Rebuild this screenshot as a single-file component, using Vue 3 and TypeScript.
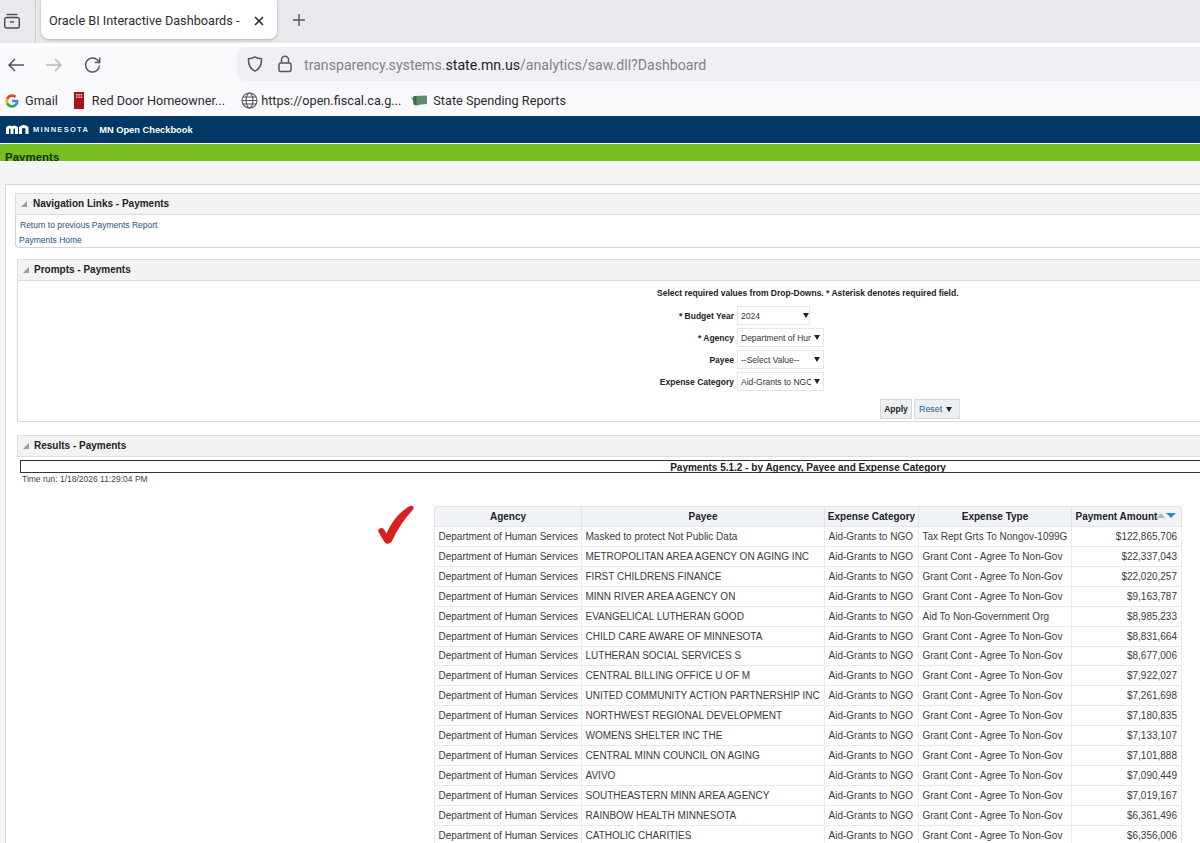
<script setup lang="ts">
const agency = 'Department of Human Services'
const grant = 'Grant Cont - Agree To Non-Gov'
interface Row { payee: string; type: string; amount: string }
const rows: Row[] = [
  { payee: 'Masked to protect Not Public Data', type: 'Tax Rept Grts To Nongov-1099G', amount: '$122,865,706' },
  { payee: 'METROPOLITAN AREA AGENCY ON AGING INC', type: grant, amount: '$22,337,043' },
  { payee: 'FIRST CHILDRENS FINANCE', type: grant, amount: '$22,020,257' },
  { payee: 'MINN RIVER AREA AGENCY ON', type: grant, amount: '$9,163,787' },
  { payee: 'EVANGELICAL LUTHERAN GOOD', type: 'Aid To Non-Government Org', amount: '$8,985,233' },
  { payee: 'CHILD CARE AWARE OF MINNESOTA', type: grant, amount: '$8,831,664' },
  { payee: 'LUTHERAN SOCIAL SERVICES S', type: grant, amount: '$8,677,006' },
  { payee: 'CENTRAL BILLING OFFICE U OF M', type: grant, amount: '$7,922,027' },
  { payee: 'UNITED COMMUNITY ACTION PARTNERSHIP INC', type: grant, amount: '$7,261,698' },
  { payee: 'NORTHWEST REGIONAL DEVELOPMENT', type: grant, amount: '$7,180,835' },
  { payee: 'WOMENS SHELTER INC THE', type: grant, amount: '$7,133,107' },
  { payee: 'CENTRAL MINN COUNCIL ON AGING', type: grant, amount: '$7,101,888' },
  { payee: 'AVIVO', type: grant, amount: '$7,090,449' },
  { payee: 'SOUTHEASTERN MINN AREA AGENCY', type: grant, amount: '$7,019,167' },
  { payee: 'RAINBOW HEALTH MINNESOTA', type: grant, amount: '$6,361,496' },
  { payee: 'CATHOLIC CHARITIES', type: grant, amount: '$6,356,006' },
]
const prompts = [
  { label: '* Budget Year', value: '2024', short: true },
  { label: '* Agency', value: 'Department of Human Services', short: false },
  { label: 'Payee', value: '--Select Value--', short: false },
  { label: 'Expense Category', value: 'Aid-Grants to NGO', short: false },
]
</script>

<template>
  <div class="screen">
    <header class="tabstrip">
      <div class="tabside">
        <svg width="18" height="18" viewBox="0 0 18 18" fill="none" stroke="#4a4a52" stroke-width="1.4">
          <path d="M3.500 2.500h11" />
          <rect x="1.700" y="5.500" width="14.600" height="10.500" rx="2" />
          <path d="M7 10h4" />
        </svg>
      </div>
      <div class="tab">
        <span class="tabtitle">Oracle BI Interactive Dashboards -</span>
        <svg width="12" height="12" viewBox="0 0 12 12" stroke="#222" stroke-width="1.5"><path d="M2 2l8 8M10 2l-8 8" /></svg>
      </div>
      <svg class="plus" width="16" height="16" viewBox="0 0 16 16" stroke="#55555c" stroke-width="1.4"><path d="M8 2v12M2 8h12" /></svg>
    </header>

    <nav class="toolbar">
      <svg class="navicon first" width="18" height="18" viewBox="0 0 18 18" fill="none" stroke="#55555c" stroke-width="1.5"><path d="M17 9H2M8 3L2 9l6 6" /></svg>
      <svg class="navicon" width="18" height="18" viewBox="0 0 18 18" fill="none" stroke="#b8b8bc" stroke-width="1.5"><path d="M1 9h15M10 3l6 6-6 6" /></svg>
      <svg class="navicon" width="18" height="18" viewBox="0 0 18 18" fill="none" stroke="#55555c" stroke-width="1.5"><path d="M16.500 9.500a7 7 0 1 1-2.100-5.500L16.500 6.200M16.700 1.500v4.900h-4.900" /></svg>
      <div class="urlbar">
        <svg width="18" height="18" viewBox="0 0 18 18" fill="none" stroke="#55555c" stroke-width="1.5"><path d="M9 1.800c2 1.300 4.200 1.900 6.500 2 .3 5.800-1.700 10-6.500 12.400C4.200 13.800 2.200 9.600 2.500 3.800c2.300-.1 4.500-.7 6.500-2z" /></svg>
        <svg class="lock" width="14" height="18" viewBox="0 0 14 18" fill="none" stroke="#55555c" stroke-width="1.5"><rect x="1" y="8" width="12" height="8.500" rx="1.500" /><path d="M3.500 8V4.800a3.500 3.500 0 0 1 7 0V8" /></svg>
        <span class="url">transparency.systems.<b>state.mn.us</b>/analytics/saw.dll?Dashboard</span>
      </div>
    </nav>

    <div class="bookmarks">
      <span class="bm gmail">
        <svg width="14" height="14" viewBox="0 0 48 48"><path fill="#4285f4" d="M46 24.500c0-1.600-.1-3.100-.4-4.500H24v8.600h12.400c-.5 2.900-2.100 5.300-4.600 6.900v5.700h7.400C43.600 36.900 46 31.200 46 24.500z" /><path fill="#34a853" d="M24 47c6.200 0 11.400-2 15.200-5.800l-7.400-5.700c-2 1.400-4.700 2.200-7.800 2.200-6 0-11-4-12.800-9.500H3.600v5.900C7.400 41.600 15.100 47 24 47z" /><path fill="#fbbc05" d="M11.200 28.200c-.5-1.400-.7-2.800-.7-4.200s.3-2.900.7-4.200v-5.900H3.600C2 17 1 20.400 1 24s1 7 2.600 10.100z" /><path fill="#ea4335" d="M24 10.300c3.400 0 6.400 1.200 8.800 3.400l6.600-6.600C35.400 3.400 30.200 1 24 1 15.100 1 7.400 6.400 3.600 13.900l7.600 5.900C13 14.300 18 10.300 24 10.300z" /></svg>
        Gmail
      </span>
      <span class="bm door">
        <svg width="10" height="17" viewBox="0 0 10 17"><rect width="10" height="17" fill="#a31616" /><path d="M2 2h1.500v1.500H2zM4.300 2h1.500v1.500H4.300zM6.600 2h1.500v1.500H6.600zM2 4.500h1.500V6H2zM4.300 4.500h1.500V6H4.300zM6.600 4.500h1.500V6H6.600z" fill="#eec9c9" /></svg>
        Red Door Homeowner...
      </span>
      <span class="bm globe">
        <svg width="17" height="17" viewBox="0 0 17 17" fill="none" stroke="#55555c" stroke-width="1.100"><circle cx="8.500" cy="8.500" r="7.500" /><ellipse cx="8.500" cy="8.500" rx="3.400" ry="7.500" /><path d="M1 8.500h15M2 5h13M2 12h13" /></svg>
        https://open.fiscal.ca.g...
      </span>
      <span class="bm state">
        <svg width="16" height="12" viewBox="0 0 16 12"><path d="M0 2.500l2 .5L3 1l13-.5V9l-6 .6-4 1-2.500-.3L2 5.500z" fill="#5f8f6b" /><path d="M2 3L3 1h2.500v8.800l-3-.3z" fill="#3d6b4a" /></svg>
        State Spending Reports
      </span>
    </div>

    <div class="brandbar">
      <svg width="23" height="9" viewBox="0 0 23 9" fill="none" stroke="#fff" stroke-width="3"><path d="M1.500 9V3c1.300-1.500 3.200-1.500 4.500 0v6M6 3c1.300-1.500 3.300-1.500 4.500 0v6" /><path d="M14.500 9V2.800c1.800-1.500 4.500-1.500 6.500 0V9" /></svg>
      <span class="wordmark">MINNESOTA</span>
      <span class="brandtitle">MN Open Checkbook</span>
    </div>
    <div class="greenbar"><span>Payments</span></div>

    <main class="page">
      <div class="panel">
        <section class="sec navsec">
          <h2 class="sechead"><i class="tri"></i>Navigation Links - Payments</h2>
          <div class="navbody">
            <a class="link one">Return to previous Payments Report</a>
            <a class="link">Payments Home</a>
          </div>
        </section>

        <section class="sec promptsec">
          <h2 class="sechead"><i class="tri"></i>Prompts - Payments</h2>
          <div class="promptbody">
            <div class="form">
              <p class="hint">Select required values from Drop-Downs. * Asterisk denotes required field.</p>
              <div v-for="p in prompts" :key="p.label" class="prow">
                <label class="plabel">{{ p.label }}</label>
                <div class="select" :class="{ short: p.short }">
                  <span class="sval">{{ p.value }}</span>
                  <i class="arrow"></i>
                </div>
              </div>
              <div class="buttons">
                <button class="btn apply" type="button">Apply</button>
                <button class="btn reset" type="button">Reset <i class="arrow small"></i></button>
              </div>
            </div>
          </div>
        </section>

        <section class="sec resultsec">
          <h2 class="sechead"><i class="tri"></i>Results - Payments</h2>
          <div class="reportwrap">
            <div class="reporttitle">Payments 5.1.2 - by Agency, Payee and Expense Category</div>
            <div class="timerun">Time run: 1/18/2026 11:29:04 PM</div>
            <div class="tablewrap">
              <svg class="check" width="40" height="42" viewBox="0 0 40 42">
                <path d="M3 26C5 24 8 25 9 28L10.500 30.500C15 20 23 9 34 3C36.500 1.800 38.500 4 37 6.500C28 16 21 27 16 38C14.500 41 10 42 8.500 39C6 35 3.500 31 2.500 29C2 28 2 27 3 26Z" fill="#d8201f" />
              </svg>
              <table class="report">
                <colgroup>
                  <col class="c1" /><col class="c2" /><col class="c3" /><col class="c4" /><col class="c5" />
                </colgroup>
                <thead>
                  <tr>
                    <th>Agency</th>
                    <th>Payee</th>
                    <th>Expense Category</th>
                    <th>Expense Type</th>
                    <th class="amt">Payment Amount<span class="sort"><i class="up"></i><i class="down"></i></span></th>
                  </tr>
                </thead>
                <tbody>
                  <tr v-for="r in rows" :key="r.payee">
                    <td>{{ agency }}</td>
                    <td>{{ r.payee }}</td>
                    <td>Aid-Grants to NGO</td>
                    <td>{{ r.type }}</td>
                    <td class="num">{{ r.amount }}</td>
                  </tr>
                </tbody>
              </table>
            </div>
          </div>
        </section>
      </div>
    </main>
  </div>
</template>

<style>
html, body { margin: 0; background: #fff; overflow: hidden; }
</style>

<style scoped>
.screen { width: 1200px; height: 843px; overflow: hidden; background: #fff; font-family: "Liberation Sans", Arial, sans-serif; color: #222; }
.tabstrip { height: 43px; background: #e9e9ed; display: flex; align-items: flex-start; }
.tabside { width: 36px; height: 43px; box-sizing: border-box; border-right: 1px solid #c9c9ce; display: flex; align-items: center; padding: 0 0 1px 3px; margin-right: 5px; }
.tab { width: 236px; height: 39px; background: #fff; border-radius: 0 0 8px 8px; box-shadow: 0 1px 3px rgba(0,0,0,.25); display: flex; align-items: center; box-sizing: border-box; padding: 2px 12px 0 8px; justify-content: space-between; }
.tabtitle { font: 12.700px Roboto, sans-serif; color: #2b2b33; white-space: nowrap; }
.plus { margin: 12px 0 0 14px; }
.toolbar { background: #f9f9fb; display: flex; align-items: center; border-top: 4px solid #fff; height: 34px; }
.navicon { margin: 0 0 0 20px; position: relative; top: 1px; }
.navicon.first { margin-left: 7px; }
.urlbar { margin-left: 136px; flex: 1; height: 34px; background: #f0f0f4; border-radius: 8px 0 0 8px; display: flex; align-items: center; padding-left: 9px; }
.lock { margin-left: 14px; }
.url { margin-left: 12px; padding-top: 2px; font: 14.150px Roboto, sans-serif; color: #82828a; white-space: nowrap; }
.url b { font-weight: 400; color: #1d1d24; }
.bookmarks { height: 35px; box-sizing: border-box; padding-top: 4px; background: #f9f9fb; display: flex; align-items: center; font: 12.700px Roboto, sans-serif; color: #2b2b33; }
.bm { display: flex; align-items: center; white-space: nowrap; }
.gmail { margin-left: 5px; gap: 6px; }
.door { margin-left: 16px; gap: 8px; }
.globe { margin-left: 16px; gap: 3px; }
.state { margin-left: 10px; gap: 6px; }
.brandbar { height: 27px; background: #003865; display: flex; align-items: center; color: #fff; padding-left: 6px; box-sizing: border-box; }
.wordmark { font: 700 7.500px "Liberation Sans", sans-serif; letter-spacing: 1.300px; margin-left: 4px; color: #e8eef3; }
.brandtitle { font: 700 9.300px "Liberation Sans", sans-serif; margin-left: 10px; }
.greenbar { height: 17px; margin-top: 1px; background: #78be20; overflow: hidden; padding-left: 5px; }
.greenbar span { display: block; font: 700 11.500px/14px "Liberation Sans", sans-serif; color: #10300a; margin-top: 6px; }
.page { background: #f5f5f5; padding: 23px 0 0 5px; height: 682px; box-sizing: border-box; }
.panel { background: #fff; border: 1px solid #d9d9d9; border-right: 0; width: 1700px; height: 800px; box-sizing: border-box; padding-top: 8px; }
.sec { width: 1600px; }
.sechead { height: 22px; margin: 0; box-sizing: border-box; background: #f3f3f3; border: 1px solid #dcdcdc; border-right: 0; padding-bottom: 1px; font: 700 10px/20px "Liberation Sans", sans-serif; color: #222; display: flex; align-items: center; }
.tri { width: 0; height: 0; border-style: solid; border-width: 0 0 6px 6px; border-color: transparent transparent #9a9a9a transparent; margin: 0 6px 0 5px; }
.navsec { margin-left: 9px; }
.navbody { height: 33px; box-sizing: border-box; border: 1px solid #d6d6d6; border-width: 0 0 1px 1px; border-radius: 0 0 0 4px; padding-left: 3px; }
.link { display: block; font: 8.500px/12px "Liberation Sans", sans-serif; color: #24527f; padding-top: 2px; }
.link.one { margin-left: 1px; padding: 4px 0 1px; }
.promptsec { margin-left: 11px; margin-top: 11px; }
.promptsec .tri { margin-right: 5px; }
.promptbody { height: 141px; box-sizing: border-box; border: 1px solid #d9d9d9; border-width: 0 0 1px 1px; display: flex; justify-content: center; width: 1582px; }
.form { width: 303px; }
.hint { font: 700 8.500px/12px "Liberation Sans", sans-serif; margin: 6px 0 6px; white-space: nowrap; color: #222; }
.prow { display: grid; grid-template-columns: 77px auto; column-gap: 3px; align-items: center; height: 21.900px; }
.plabel { text-align: right; font: 700 8.500px "Liberation Sans", sans-serif; white-space: nowrap; justify-self: end; }
.select { width: 87px; height: 19px; box-sizing: border-box; border: 1px solid #e6e6e6; display: flex; align-items: center; padding: 0 3px; justify-content: space-between; background: #fff; }
.select.short { width: 73px; padding-right: 0; }
.sval { font: 8.500px "Liberation Sans", sans-serif; color: #333; white-space: nowrap; overflow: hidden; width: 70px; flex: none; }
.short .sval { width: 60px; }
.arrow { width: 0; height: 0; border-style: solid; border-width: 5px 3.500px 0; border-color: #222 transparent transparent; flex: none; display: inline-block; }
.arrow.small { vertical-align: 0; margin-left: 1px; }
.buttons { display: flex; justify-content: flex-end; gap: 2px; margin-top: 6px; }
.btn { height: 20px; box-sizing: border-box; border: 1px solid #d6dade; background: #eceff1; padding: 0; font: 8.500px "Liberation Sans", sans-serif; }
.apply { width: 32px; font-weight: 700; color: #222; }
.reset { width: 46px; color: #1c5f94; font-size: 8.900px; text-align: left; padding-left: 4px; }
.resultsec { margin-left: 11px; margin-top: 13px; }
.resultsec .tri { margin-right: 5px; }
.reportwrap { padding: 3px 0 0 3px; }
.reporttitle { width: 1576px; box-sizing: border-box; height: 13px; border: 1px solid #333; border-width: 1px 1px 1px 1.500px; text-align: center; font: 700 10px/13px "Liberation Sans", sans-serif; color: #222; }
.timerun { font: 8.500px/11px "Liberation Sans", sans-serif; color: #444; margin: 1px 0 0 2px; }
.tablewrap { position: relative; padding: 21px 0 0 414px; }
.check { position: absolute; left: 356px; top: 18px; }
.report { border-collapse: collapse; table-layout: fixed; width: 747px; }
.c1 { width: 147px; } .c2 { width: 243px; } .c3 { width: 94px; } .c4 { width: 153px; } .c5 { width: 110px; }
.report th { height: 20px; box-sizing: border-box; padding: 0; background: #f0f3f8; border: 1px solid #e2e5ea; font: 700 10px "Liberation Sans", sans-serif; color: #222; text-align: center; white-space: nowrap; }
.report th.amt { text-align: left; padding-left: 3.500px; }
.report td { height: 19.930px; box-sizing: border-box; padding: 0 4px 0 3.500px; border: 1px solid #e8eaee; font: 10px "Liberation Sans", sans-serif; color: #3a3a3a; white-space: nowrap; overflow: hidden; }
.report td.num { text-align: right; }
.sort { display: inline-flex; gap: 1px; vertical-align: 2px; }
.up { width: 0; height: 0; border-style: solid; border-width: 0 4.500px 5px; border-color: transparent transparent #b4b8bd; }
.down { width: 0; height: 0; border-style: solid; border-width: 5px 5px 0; border-color: #2f86c8 transparent transparent; }
</style>
